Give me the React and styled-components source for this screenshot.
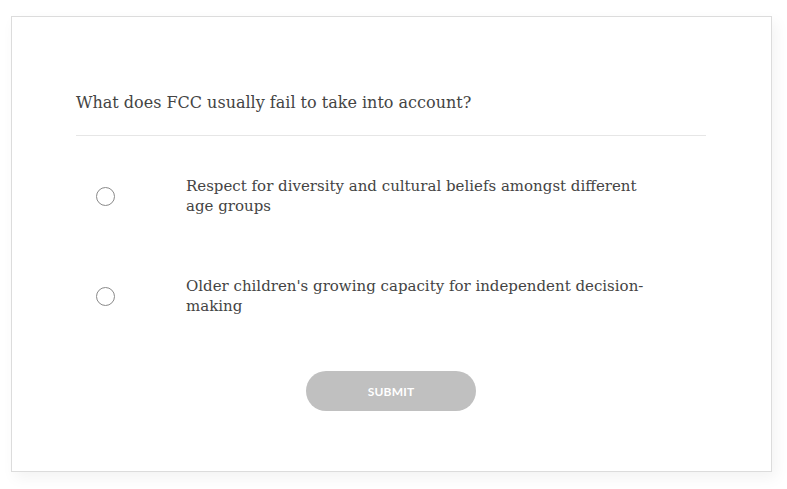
import React from 'react'
import styled, { createGlobalStyle } from 'styled-components'

const GlobalStyle = createGlobalStyle`
  body {
    margin: 0;
    background: #fff;
    font-family: 'DejaVu Serif', 'Liberation Serif', serif;
  }
`

const Page = styled.div`
  padding: 16px 16px 17px 11px;
`

const Card = styled.div`
  box-sizing: border-box;
  width: 761px;
  height: 456px;
  border: 1px solid #dcdcdc;
  background: #fff;
  box-shadow: 4px 6px 14px rgba(0, 0, 0, 0.05);
  padding: 74px 65px 0 64px;
  display: flex;
  flex-direction: column;
`

const Question = styled.div`
  font-size: 16px;
  line-height: 24px;
  color: #444;
  padding-bottom: 20px;
  border-bottom: 1px solid #e6e6e6;
`

const Options = styled.div`
  display: flex;
  flex-direction: column;
  gap: 60px;
  padding-top: 40px;
`

const Option = styled.label`
  display: flex;
  align-items: center;
  cursor: pointer;
`

const RadioCell = styled.div`
  width: 110px;
  flex-shrink: 0;
  display: flex;
  padding-left: 20px;
  box-sizing: border-box;
`

const Radio = styled.span`
  width: 17px;
  height: 17px;
  border: 1px solid #8a8a8a;
  border-radius: 50%;
  background: #fff;
`

const OptionText = styled.div`
  font-size: 15px;
  line-height: 20px;
  color: #444;
  max-width: 460px;
`

const Actions = styled.div`
  display: flex;
  justify-content: center;
  padding-top: 55px;
`

const SubmitButton = styled.button`
  width: 170px;
  height: 40px;
  border: none;
  border-radius: 20px;
  background: #c0c0c0;
  color: #fff;
  font-family: Lato, 'Liberation Sans', sans-serif;
  font-weight: 700;
  font-size: 12px;
  letter-spacing: 0.2px;
  text-transform: uppercase;
  cursor: default;
`

const options = [
  'Respect for diversity and cultural beliefs amongst different age groups',
  "Older children's growing capacity for independent decision-making",
]

export default function App() {
  return (
    <>
      <GlobalStyle />
      <Page>
        <Card>
          <Question>What does FCC usually fail to take into account?</Question>
          <Options>
            {options.map((text) => (
              <Option key={text}>
                <RadioCell>
                  <Radio />
                </RadioCell>
                <OptionText>{text}</OptionText>
              </Option>
            ))}
          </Options>
          <Actions>
            <SubmitButton disabled>Submit</SubmitButton>
          </Actions>
        </Card>
      </Page>
    </>
  )
}
